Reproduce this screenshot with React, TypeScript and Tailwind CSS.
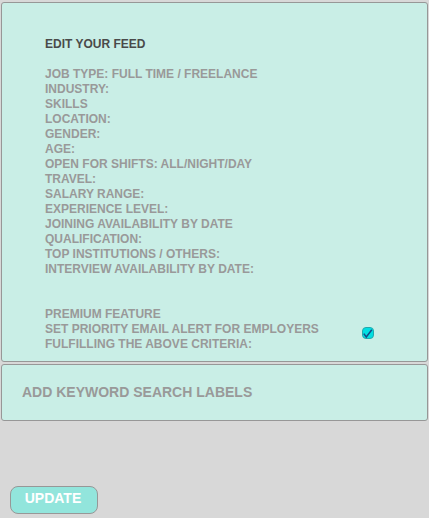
import React from "react";

const criteria: string[] = [
  "JOB TYPE: FULL TIME / FREELANCE",
  "INDUSTRY:",
  "SKILLS",
  "LOCATION:",
  "GENDER:",
  "AGE:",
  "OPEN FOR SHIFTS: ALL/NIGHT/DAY",
  "TRAVEL:",
  "SALARY RANGE:",
  "EXPERIENCE LEVEL:",
  "JOINING AVAILABILITY BY DATE",
  "QUALIFICATION:",
  "TOP INSTITUTIONS / OTHERS:",
  "INTERVIEW AVAILABILITY BY DATE:",
];

function PriorityAlert() {
  return (
    <div className="mt-[30px] flex items-center justify-between">
      <label htmlFor="priority-alert">
        PREMIUM FEATURE
        <br />
        SET PRIORITY EMAIL ALERT FOR EMPLOYERS
        <br />
        FULFILLING THE ABOVE CRITERIA:
      </label>
      <span className="mt-1.5 grid shrink-0">
        <input
          id="priority-alert"
          type="checkbox"
          defaultChecked
          className="peer col-start-1 row-start-1 size-3 appearance-none rounded-[4px] border border-[#22a9ad] bg-[#00dfe2]"
        />
        <svg
          viewBox="0 0 12 12"
          aria-hidden="true"
          className="pointer-events-none invisible col-start-1 row-start-1 size-3 peer-checked:visible"
        >
          <path d="M1.8 6.6 L4.3 10 L9.8 2.8" fill="none" stroke="#154a86" strokeWidth="1.5" />
        </svg>
      </span>
    </div>
  );
}

export default function App() {
  return (
    <main className="min-h-screen bg-[#d8d8d8] px-px pt-0.5 font-['Liberation_Sans',Arial,sans-serif] font-bold text-[#999999]">
      <section className="rounded-[3px] border border-[#979797] bg-[#c9eee6] pt-[34px] pr-[53px] pb-[9px] pl-[43px] text-xs leading-[15px]">
        <h1 className="mb-[15px] text-[#4a4a4a]">EDIT YOUR FEED</h1>
        <ul>
          {criteria.map((item) => (
            <li key={item}>{item}</li>
          ))}
        </ul>
        <PriorityAlert />
      </section>

      <input
        type="text"
        aria-label="Add keyword search labels"
        placeholder="ADD KEYWORD SEARCH LABELS"
        className="mt-0.5 block h-[57px] w-full rounded-[3px] border border-[#979797] bg-[#c9eee6] px-5 pb-0.5 text-sm placeholder:text-[#999999] placeholder:opacity-100"
      />

      <button
        type="button"
        className="mt-[65px] ml-[9px] h-7 w-[88px] rounded-lg border border-[#979797] bg-[#92e5dc] pr-0.5 pb-1 text-sm leading-5 text-white"
      >
        UPDATE
      </button>
    </main>
  );
}
